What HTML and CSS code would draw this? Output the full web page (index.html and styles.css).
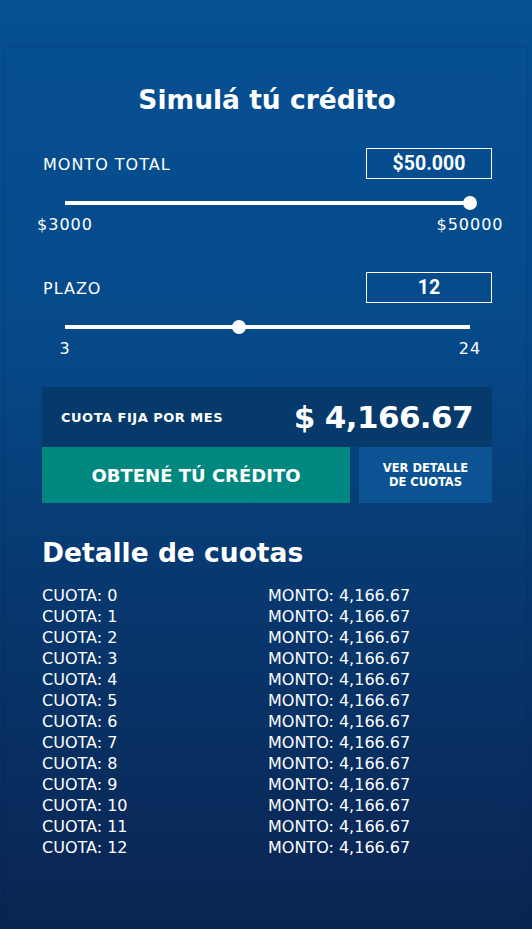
FILE: index.html
```html
<!DOCTYPE html>
<html lang="es">
<head>
<meta charset="utf-8">
<title>Simulá tú crédito</title>
<link rel="stylesheet" href="styles.css">
</head>
<body>
<main class="card">
  <h1 class="title">Simulá tú crédito</h1>

  <section class="field">
    <div class="field-row">
      <span class="field-label">MONTO TOTAL</span>
      <div class="field-input">$50.000</div>
    </div>
    <div class="slider">
      <div class="track">
        <span class="thumb" style="left:100%"></span>
      </div>
      <div class="ticks">
        <span class="tick"><span>$3000</span></span>
        <span class="tick"><span>$50000</span></span>
      </div>
    </div>
  </section>

  <section class="field field-second">
    <div class="field-row">
      <span class="field-label">PLAZO</span>
      <div class="field-input">12</div>
    </div>
    <div class="slider">
      <div class="track">
        <span class="thumb" style="left:42.9%"></span>
      </div>
      <div class="ticks">
        <span class="tick"><span>3</span></span>
        <span class="tick"><span>24</span></span>
      </div>
    </div>
  </section>

  <section class="result">
    <div class="result-box">
      <span class="result-label">CUOTA FIJA POR MES</span>
      <span class="result-amount">$ 4,166.67</span>
    </div>
    <div class="actions">
      <button class="btn btn-primary">OBTENÉ TÚ CRÉDITO</button>
      <button class="btn btn-secondary">VER DETALLE<br>DE CUOTAS</button>
    </div>
  </section>

  <section class="detail">
    <h2 class="detail-title">Detalle de cuotas</h2>
    <div class="detail-list">
      <span>CUOTA: 0</span><span>MONTO: 4,166.67</span>
      <span>CUOTA: 1</span><span>MONTO: 4,166.67</span>
      <span>CUOTA: 2</span><span>MONTO: 4,166.67</span>
      <span>CUOTA: 3</span><span>MONTO: 4,166.67</span>
      <span>CUOTA: 4</span><span>MONTO: 4,166.67</span>
      <span>CUOTA: 5</span><span>MONTO: 4,166.67</span>
      <span>CUOTA: 6</span><span>MONTO: 4,166.67</span>
      <span>CUOTA: 7</span><span>MONTO: 4,166.67</span>
      <span>CUOTA: 8</span><span>MONTO: 4,166.67</span>
      <span>CUOTA: 9</span><span>MONTO: 4,166.67</span>
      <span>CUOTA: 10</span><span>MONTO: 4,166.67</span>
      <span>CUOTA: 11</span><span>MONTO: 4,166.67</span>
      <span>CUOTA: 12</span><span>MONTO: 4,166.67</span>
    </div>
  </section>
</main>
</body>
</html>
```

FILE: styles.css
```css
* { box-sizing: border-box; }

html, body {
  margin: 0;
  height: 100%;
}

body {
  background: linear-gradient(180deg, #065093 0%, #064a8a 35%, #073a72 60%, #0a2452 100%);
  font-family: "DejaVu Sans", "Noto Sans", sans-serif;
  color: #ffffff;
  overflow: hidden;
}

.card {
  margin: 48px 6px 0;
  padding: 35px 34px 0 36px;
  min-height: 881px;
  box-shadow: 0 0 6px rgba(0, 20, 60, 0.18);
}

.title {
  margin: 0;
  text-align: center;
  font-size: 26.5px;
  line-height: 34px;
  font-weight: 700;
}

.field { margin-top: 31px; }
.field-second { margin-top: 38px; }

.field-row {
  display: flex;
  justify-content: space-between;
  align-items: center;
}

.field-label {
  font-size: 16px;
  font-weight: 400;
  padding-left: 1px;
  letter-spacing: 1px;
  padding-top: 2px;
}

.field-input {
  width: 126px;
  height: 31px;
  border: 1px solid #ffffff;
  font-family: Roboto, "Liberation Sans", sans-serif;
  font-weight: 700;
  font-size: 19.5px;
  line-height: 29px;
  text-align: center;
}

.slider {
  margin: 17px 22px 0 23px;
}

.track {
  position: relative;
  height: 14px;
}

.track::before {
  content: "";
  position: absolute;
  left: 0;
  right: 0;
  top: 5px;
  height: 4px;
  background: #ffffff;
}

.thumb {
  position: absolute;
  top: 0;
  width: 14px;
  height: 14px;
  margin-left: -7px;
  border-radius: 50%;
  background: #ffffff;
}

.ticks {
  display: flex;
  justify-content: space-between;
  margin-top: 6px;
}

.tick {
  width: 0;
  display: flex;
  justify-content: center;
  white-space: nowrap;
  font-size: 16px;
  letter-spacing: 1px;
  line-height: 18px;
}

.result { margin-top: 29px; }

.result-box {
  height: 60px;
  background: #053a6b;
  display: flex;
  align-items: center;
  justify-content: space-between;
  padding: 0 19px 0 19px;
}

.result-label {
  font-size: 13px;
  letter-spacing: 0.5px;
  font-weight: 700;
}

.result-amount {
  font-size: 31px;
  letter-spacing: -0.6px;
  font-weight: 700;
}

.actions {
  display: flex;
  gap: 9px;
  height: 56px;
}

.btn {
  border: 0;
  margin: 0;
  color: #ffffff;
  font-family: inherit;
  font-weight: 700;
  cursor: pointer;
}

.btn-primary {
  flex: 0 0 308px;
  background: #00877f;
  font-size: 18px;
}

.btn-secondary {
  flex: 1;
  background: #0b5392;
  font-size: 11.5px;
  line-height: 14px;
}

.detail { margin-top: 34px; }

.detail-title {
  margin: 0;
  font-size: 26.5px;
  line-height: 32px;
  font-weight: 700;
}

.detail-list {
  margin-top: 16px;
  display: grid;
  grid-template-columns: 226px 1fr;
  font-size: 16px;
  line-height: 21px;
}
```
